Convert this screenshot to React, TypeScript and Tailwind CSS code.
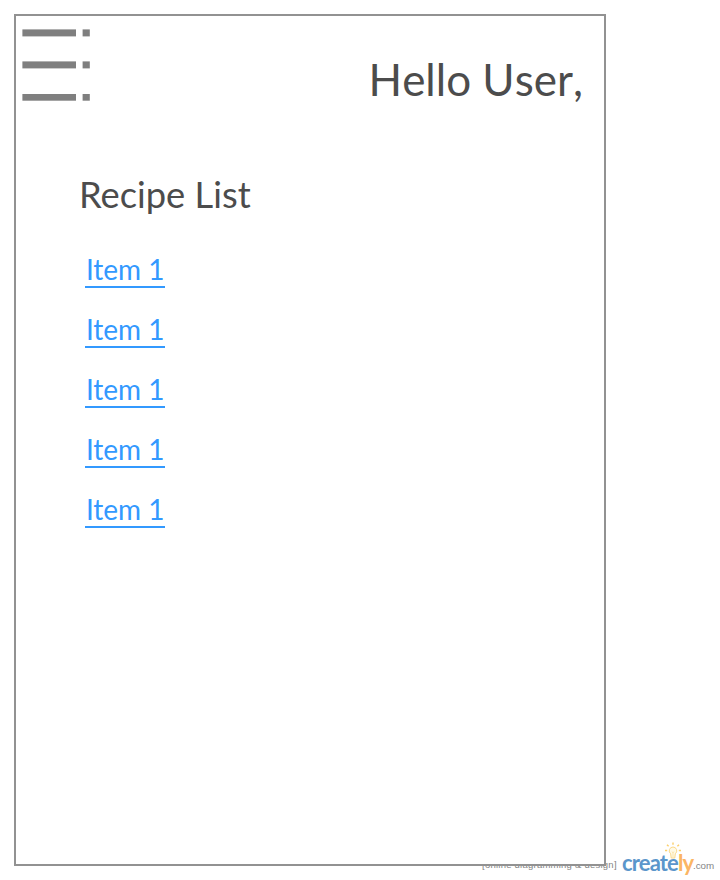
import React from 'react';

const items = ['Item 1', 'Item 1', 'Item 1', 'Item 1', 'Item 1'];

function MenuIcon() {
  return (
    <svg className="block h-[73px] w-[69px] shrink-0" viewBox="0 0 69 73" fill="#7f7f7f">
      <rect x="0.4" y="0.4" width="53.6" height="7" />
      <rect x="0.4" y="32.4" width="53.6" height="7" />
      <rect x="0.4" y="65" width="53.6" height="6.7" />
      <rect x="60.6" y="0.4" width="7.2" height="7" />
      <rect x="60.6" y="32.4" width="7.2" height="7" />
      <rect x="60.6" y="65" width="7.2" height="6.7" />
    </svg>
  );
}

function Bulb() {
  return (
    <svg className="ml-[42px] h-[17px] w-[18px]" viewBox="0 0 18 17" fill="none">
      <path d="M9 5a3.8 3.8 0 0 0-2.3 6.8l.5 4.2h3.6l.5-4.2A3.8 3.8 0 0 0 9 5Z" fill="#fffae6" stroke="#fbd98a" />
      <path d="M8 9.5 9 11l1-1.5M9 11v4" stroke="#fbdc96" strokeWidth="0.7" />
      <path d="M9 .5v2.2M3 2.7l1.6 1.6M15 2.7l-1.6 1.6M1 8.5h2.2M14.8 8.5H17" stroke="#fbcf6a" strokeWidth="1.4" />
    </svg>
  );
}

function Watermark() {
  return (
    <footer className="absolute bottom-0 right-[5px] flex h-[38px] items-start whitespace-nowrap font-['Liberation_Sans',sans-serif] text-[#858585]">
      <span className="mr-[5px] mt-[17px] w-[135px] text-[9.5px] leading-[12px] tracking-[0.24px]">[online diagramming &amp; design]</span>
      <div className="flex h-[38px] w-[71px] flex-col">
        <Bulb />
        <span className="-mt-[8px] font-[Lato,sans-serif] text-[22px] font-bold leading-[24px] tracking-[-0.85px] text-[#5b96cb]">
          create<span className="text-[#fbb563]">ly</span>
        </span>
      </div>
      <span className="mt-[18px] w-[22px] text-[9.8px] leading-[12px]">.com</span>
    </footer>
  );
}

export default function App() {
  return (
    <div className="relative h-[880px] w-[720px] overflow-hidden bg-white p-[14px] font-[Lato,sans-serif] antialiased">
      <Watermark />
      <main className="relative flex h-[852px] w-[592px] flex-col border-2 border-[#929292] bg-white text-[#4c4c4c]">
        <header className="flex items-start justify-between pl-[6px] pr-[21px] pt-[13px]">
          <MenuIcon />
          <h1 className="pt-[23px] text-[44px] leading-[54px] [font-kerning:none]">Hello User,</h1>
        </header>
        <section className="px-[63px] pt-[65px]">
          <h2 className="text-[36.3px] leading-[46px]">Recipe List</h2>
          <ul className="flex flex-col gap-[28px] pl-[6px] pt-[39px] text-[28px] text-[#3399ff]">
            {items.map((item, i) => (
              <li key={i} className="h-[32px] w-[80.4px] whitespace-nowrap border-b-2 border-[#3399ff] text-center leading-[26px]">
                {item}
              </li>
            ))}
          </ul>
        </section>
      </main>
    </div>
  );
}
